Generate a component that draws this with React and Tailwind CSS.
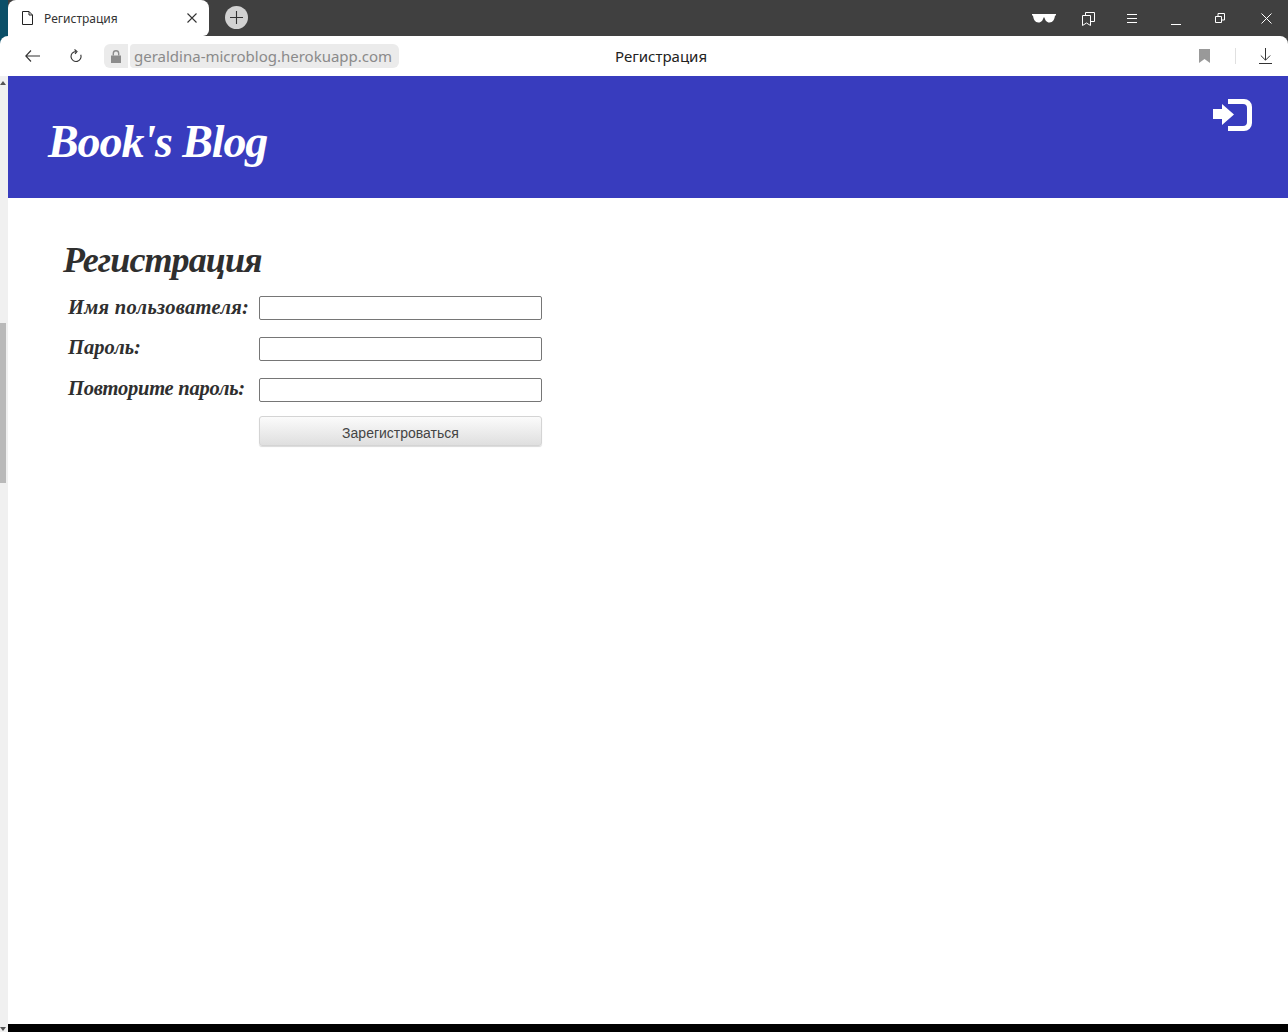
import React from "react";

const Ui = "font-['Noto_Sans','Open_Sans',sans-serif]";
const Script = "font-['Liberation_Serif',serif] italic font-bold";

function Field({ label, tune }) {
  return (
    <div className="flex h-[24px] items-start">
      <label className={`${Script} ${tune} w-[196px] pl-[5px] text-[20.5px] leading-[22px] text-[#2f2f2f] whitespace-nowrap`}>{label}</label>
      <input type="text" className="h-[24px] w-[283px] rounded-[2px] border border-[#767676] bg-white" />
    </div>
  );
}

export default function App() {
  return (
    <div className={`${Ui} flex h-[1032px] w-[1288px] flex-col overflow-hidden bg-white`}>
      {/* tab strip */}
      <div className="flex h-[36px] shrink-0 items-center bg-[#404040]">
        <div className="h-full w-[8px] shrink-0 bg-[#0b4f68]" />
        <div className="flex h-full w-[201px] shrink-0 items-center rounded-t-[8px] rounded-br-[6px] bg-white pl-[14px] pr-[12px]">
          <svg width="11" height="14" viewBox="0 0 11 14" fill="none" stroke="#222" strokeWidth="1" className="shrink-0">
            <path d="M.5.5h6.500l3.500 3.500v9.500h-10z M7 .5v3.500h3.500" />
          </svg>
          <span className="ml-[11px] mt-[1px] flex-1 text-[12px] leading-none text-[#333]">Регистрация</span>
          <svg width="10" height="10" viewBox="0 0 10 10" stroke="#333" strokeWidth="1.100"><path d="M.5.5l9 9M9.500.5l-9 9" /></svg>
        </div>
        <div className="ml-[16px] mb-[1px] flex h-[23px] w-[23px] items-center justify-center rounded-full bg-[#d2d2d2]">
          <svg width="13" height="13" viewBox="0 0 13 13" stroke="#333" strokeWidth="1.100"><path d="M6.500 0v13M0 6.500h13" /></svg>
        </div>
        <div className="ml-auto flex h-full items-center text-white">
          <svg width="24" height="10" viewBox="0 0 24 10" fill="#fff" className="mr-[26px]">
            <path d="M0 1h24v1.500h-1C22.500 6.500 21 9.500 17.500 9.500 14.500 9.500 13 7 12.500 4.500h-1C11 7 9.500 9.500 6.500 9.500 3 9.500 1.500 6.500 1 2.500H0z" />
          </svg>
          <svg width="13" height="15" viewBox="0 0 13 15" fill="none" stroke="#fff" strokeWidth="1" className="mr-[31px]">
            <path d="M.5 4.500h8v10l-4-2.500-4 2.500z M3.500 4.500V1.500h9v9h-4" />
          </svg>
          <svg width="12" height="9" viewBox="0 0 12 9" stroke="#fff" strokeWidth="1" className="mr-[33px]"><path d="M1 .5h10M1 4.500h10M1 8.500h10" /></svg>
          <svg width="10" height="10" viewBox="0 0 10 10" stroke="#fff" strokeWidth="1" className="mr-[34px] mt-[4px]"><path d="M0 9.500h10" /></svg>
          <svg width="10" height="10" viewBox="0 0 10 10" fill="none" stroke="#fff" strokeWidth="1" className="mr-[36px]"><path d="M.5 3.500h6v6h-6z M3 3.500V.5h6.500V7H6.500" /></svg>
          <svg width="11" height="11" viewBox="0 0 11 11" stroke="#fff" strokeWidth="1" className="mr-[16px]"><path d="M.5.5l10 10M10.500.5l-10 10" /></svg>
        </div>
      </div>

      {/* address bar: its rounded corners reveal the strip colours behind them */}
      <div className="relative h-[40px] shrink-0 bg-[#404040]">
        <div className="absolute left-0 top-0 h-[8px] w-[8px] bg-[#0b4f68]" />
        <div className="relative flex h-full items-center rounded-t-[8px] bg-white">
          <svg width="15" height="12" viewBox="0 0 15 12" fill="none" stroke="#333" strokeWidth="1.100" className="ml-[25px]">
            <path d="M15 6H1M6 .5L.8 6 6 11.500" />
          </svg>
          <svg width="12" height="14" viewBox="0 0 12 14" fill="none" stroke="#333" strokeWidth="1.100" className="ml-[30px]">
            <path d="M6 2.500a5 5 0 1 0 4.700 3.200M4.500 .5L7 2.500 5 4.800" />
          </svg>
          <div className="ml-[22px] flex h-[24px] w-[24px] items-center justify-center rounded-l-[6px] bg-[#ebebeb]">
            <svg width="10" height="13" viewBox="0 0 10 13" fill="#8c8c8c">
              <path d="M0 5.500h10V13H0z" /><path d="M2.300 5.500V3.500a2.700 2.700 0 0 1 5.400 0v2" fill="none" stroke="#8c8c8c" strokeWidth="1.400" />
            </svg>
          </div>
          <div className="ml-[2px] flex h-[24px] w-[269px] items-center rounded-r-[6px] rounded-l-[4px] bg-[#ebebeb] pl-[4px] text-[15px] text-[#8a8a8a]">geraldina-microblog.herokuapp.com</div>
          <span className="absolute left-[615px] top-[10px] text-[15px] leading-[20px] text-[#222]">Регистрация</span>
          <svg width="11" height="14" viewBox="0 0 11 14" fill="#999" className="ml-auto mr-[25px]"><path d="M0 0h11v14L5.500 10 0 14z" /></svg>
          <div className="mr-[23px] h-[16px] w-px bg-[#e0e0e0]" />
          <svg width="13" height="16" viewBox="0 0 13 16" fill="none" stroke="#333" strokeWidth="1" className="mr-[16px]">
            <path d="M6.500 0v12M1.800 7.500l4.700 4.700 4.700-4.700M0 15.500h13" />
          </svg>
        </div>
      </div>

      {/* page */}
      <div className="flex min-h-0 flex-1">
        <div className="relative w-[8px] shrink-0 bg-[#f0f0f0]">
          <div className="absolute left-0 top-[5px] h-0 w-0 border-x-[3px] border-b-[4px] border-x-transparent border-b-[#555]" />
          <div className="absolute left-0 top-[247px] h-[160px] w-[6px] bg-[#b9b9b9]" />
          <div className="absolute bottom-[1px] left-0 h-0 w-0 border-x-[3px] border-t-[4px] border-x-transparent border-t-[#555]" />
        </div>
        <div className="flex min-w-0 flex-1 flex-col">
          <header className="flex h-[122px] shrink-0 items-start justify-between bg-[#383cbe] pl-[40px] pr-[36px]">
            <h1 className={`${Script} mt-[35px] text-[46px] leading-[62px] tracking-[-1.1px] text-white`}>Book's Blog</h1>
            <svg width="39" height="32" viewBox="0 0 39 32" fill="#fff" className="mt-[23px]">
              <path d="M15 0h16a8 8 0 0 1 8 8v16a8 8 0 0 1-8 8H15v-5h15a4 4 0 0 0 4-4V9a4 4 0 0 0-4-4H15z" />
              <path d="M0 10h9V5l12 10.500L9 26v-6H0z" />
            </svg>
          </header>
          <main className="flex-1 pl-[55px] pt-[42px]">
            <h2 className={`${Script} text-[36px] leading-[40px] tracking-[-0.9px] text-[#2f2f2f]`}>Регистрация</h2>
            <form className="mt-[16px]">
              <div className="flex flex-col gap-[17px]">
                <Field label="Имя пользователя:" tune="tracking-[0.3px]" />
                <Field label="Пароль:" tune="-mt-[1px]" />
                <Field label="Повторите пароль:" tune="-mt-[1px] tracking-[-0.25px]" />
              </div>
              <div className="mt-[14px] pl-[196px]">
                <button type="button" className="h-[30px] w-[283px] rounded-[3px] border border-[#d4d4d4] bg-gradient-to-b from-[#fbfbfb] to-[#dfdfdf] pt-[5px] font-['Liberation_Sans',sans-serif] text-[14px] text-[#444] shadow-[0_1px_1px_rgba(0,0,0,0.15)]">Зарегистроваться</button>
              </div>
            </form>
          </main>
          <div className="h-[8px] shrink-0 bg-black" />
        </div>
      </div>
    </div>
  );
}
